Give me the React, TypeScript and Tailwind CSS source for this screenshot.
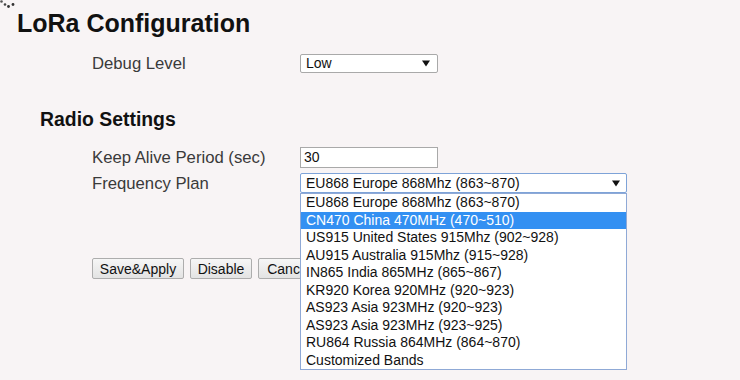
import React from 'react';

const bands = [
    'EU868 Europe 868Mhz (863~870)',
    'CN470 China 470MHz (470~510)',
    'US915 United States 915Mhz (902~928)',
    'AU915 Australia 915Mhz (915~928)',
    'IN865 India 865MHz (865~867)',
    'KR920 Korea 920MHz (920~923)',
    'AS923 Asia 923MHz (920~923)',
    'AS923 Asia 923MHz (923~925)',
    'RU864 Russia 864MHz (864~870)',
    'Customized Bands',
];

// little black select arrow
const Arrow: React.FC = () => (
    <svg width="8" height="7" viewBox="0 0 8 7" className="shrink-0">
        <path d="M0 0.5 L8 0.5 L4 6.5 Z" fill="#111" />
    </svg>
);

const App: React.FC = () => {
    return (
        <div className="relative w-[740px] h-[380px] overflow-hidden bg-[#f8f4f5] font-['Liberation_Sans',Arial,sans-serif] text-[#111]">
            {/* loading spinner, mostly off screen */}
            <svg width="16" height="9" className="absolute left-0 top-0">
                <circle cx="1.5" cy="1.5" r="1.3" fill="#555" />
                <circle cx="5" cy="4.5" r="1.3" fill="#444" />
                <circle cx="8.5" cy="6.5" r="1.4" fill="#333" />
                <circle cx="13" cy="4.5" r="1.4" fill="#333" />
            </svg>

            <h1 className="pt-[9px] pl-[17px] text-[25px] leading-[28px] font-bold">LoRa Configuration</h1>

            <div className="mt-[17px] pl-[92px] grid grid-cols-[208px_138px] items-center">
                <span className="text-[16.7px] leading-[19px] text-[#3a3a3a]">Debug Level</span>
                <div className="h-[19px] flex items-center justify-between pl-[5px] pr-[7px] bg-white border border-[#a9a9a9] rounded-[2px] text-[14px]">
                    <span>Low</span>
                    <Arrow />
                </div>
            </div>

            <h3 className="mt-[35px] pl-[40px] text-[19.4px] leading-[22px] font-bold">Radio Settings</h3>

            <div className="mt-[17px] pl-[92px] grid grid-cols-[208px_138px] items-center">
                <span className="text-[16.7px] leading-[19px] text-[#3a3a3a]">Keep Alive Period (sec)</span>
                <div className="h-[21px] flex items-center pl-[3px] bg-white border border-[#a9a9a9] text-[14px]">30</div>
            </div>

            <div className="mt-[5px] pl-[92px] grid grid-cols-[208px_327px] items-center">
                <span className="text-[16.7px] leading-[19px] text-[#3a3a3a]">Frequency Plan</span>
                <div className="relative">
                    <div className="h-[20px] flex items-center justify-between pl-[5px] pr-[6px] bg-white border border-[#7ea3d8] rounded-[2px] text-[14px]">
                        <span>EU868 Europe 868Mhz (863~870)</span>
                        <Arrow />
                    </div>
                    <ul className="absolute left-0 right-0 top-full z-10 bg-white border border-[#8fa9d6] text-[14px]">
                        {bands.map((b, i) => (
                            <li key={b} className={`h-[17.5px] leading-[17.5px] pl-[5px] whitespace-nowrap ${i === 1 ? 'bg-[#3390f2] text-white' : ''}`}>
                                {b}
                            </li>
                        ))}
                    </ul>
                </div>
            </div>

            <div className="mt-[65px] pl-[92px] flex gap-[6px] text-[14px]">
                <button className="h-[21px] w-[92px] bg-gradient-to-b from-[#f6f6f6] to-[#e3e3e3] border border-[#adadad] rounded-[2px]">Save&amp;Apply</button>
                <button className="h-[21px] w-[62px] bg-gradient-to-b from-[#f6f6f6] to-[#e3e3e3] border border-[#adadad] rounded-[2px]">Disable</button>
                <button className="h-[21px] w-[62px] bg-gradient-to-b from-[#f6f6f6] to-[#e3e3e3] border border-[#adadad] rounded-[2px]">Cancel</button>
            </div>
        </div>
    );
};

export default App;
